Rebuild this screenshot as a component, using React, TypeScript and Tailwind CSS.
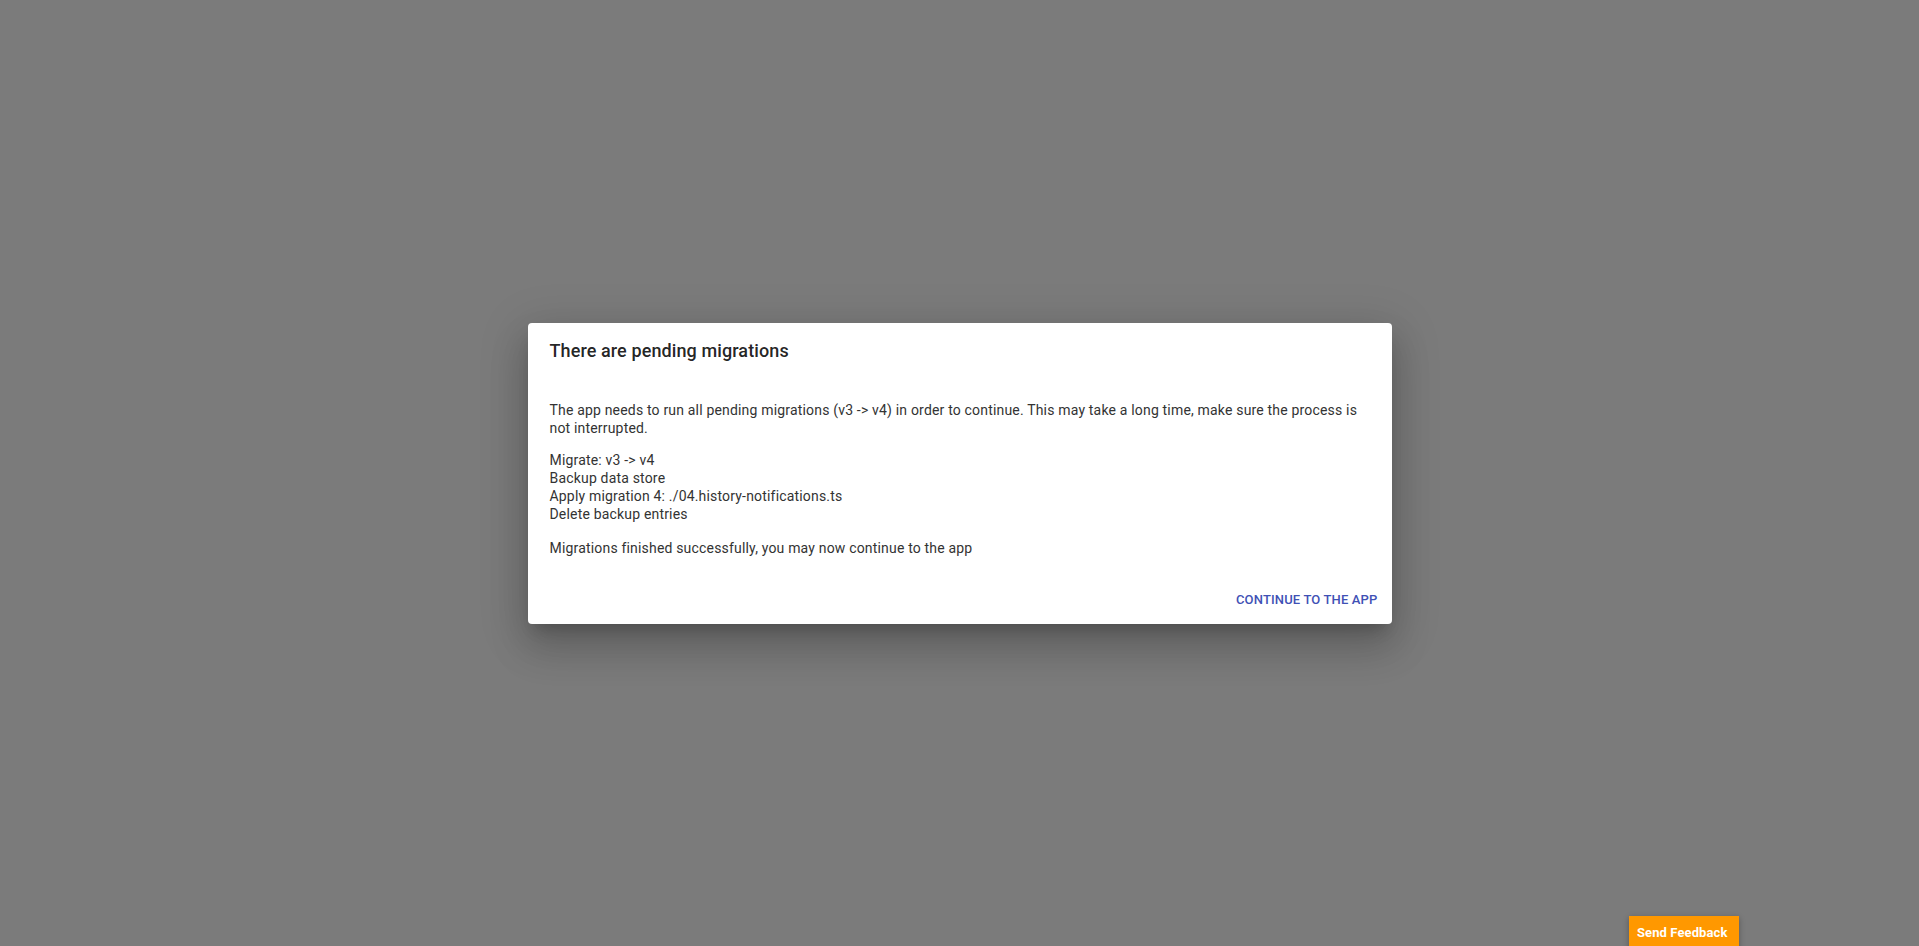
const steps = [
  "Migrate: v3 -> v4",
  "Backup data store",
  "Apply migration 4: ./04.history-notifications.ts",
  "Delete backup entries",
];

const App = () => {
  return (
    <div className="relative flex h-screen w-full items-center justify-center overflow-hidden bg-[#7b7b7b] font-['Roboto',sans-serif]">
      <div className="w-[864px] rounded bg-white shadow-[0_11px_15px_-7px_rgba(0,0,0,0.2),0_24px_38px_3px_rgba(0,0,0,0.14),0_9px_46px_8px_rgba(0,0,0,0.12)]">
        <h2 className="px-[22px] pt-3 text-[18px] font-medium leading-8 tracking-[0.1px] text-[rgba(0,0,0,0.87)]">
          There are pending migrations
        </h2>
        <div className="px-[22px] pt-[34px] text-[14px] leading-[18px] tracking-[0.18px] text-[#333]">
          <p>
            The app needs to run all pending migrations (v3 -&gt; v4) in order to continue. This may take a long time, make
            sure the process is not interrupted.
          </p>
          <div className="mt-[14px]">
            {steps.map((s) => (
              <div key={s}>{s}</div>
            ))}
          </div>
          <p className="mt-4">Migrations finished successfully, you may now continue to the app</p>
        </div>
        <div className="flex justify-end pl-2 pr-[6px] pt-[31px] pb-[12px]">
          <button className="rounded px-2 text-[13px] font-medium uppercase leading-6 tracking-[0.15px] text-[#3f51b5]">
            Continue to the app
          </button>
        </div>
      </div>

      <button className="absolute bottom-[-3px] left-[1629px] h-[33px] w-[110px] bg-[#ff9800] px-2 text-left text-[13px] font-bold leading-[33px] tracking-[0.1px] text-white shadow-[0_2px_6px_rgba(0,0,0,0.3)]">
        Send Feedback
      </button>
    </div>
  );
};

export default App;
